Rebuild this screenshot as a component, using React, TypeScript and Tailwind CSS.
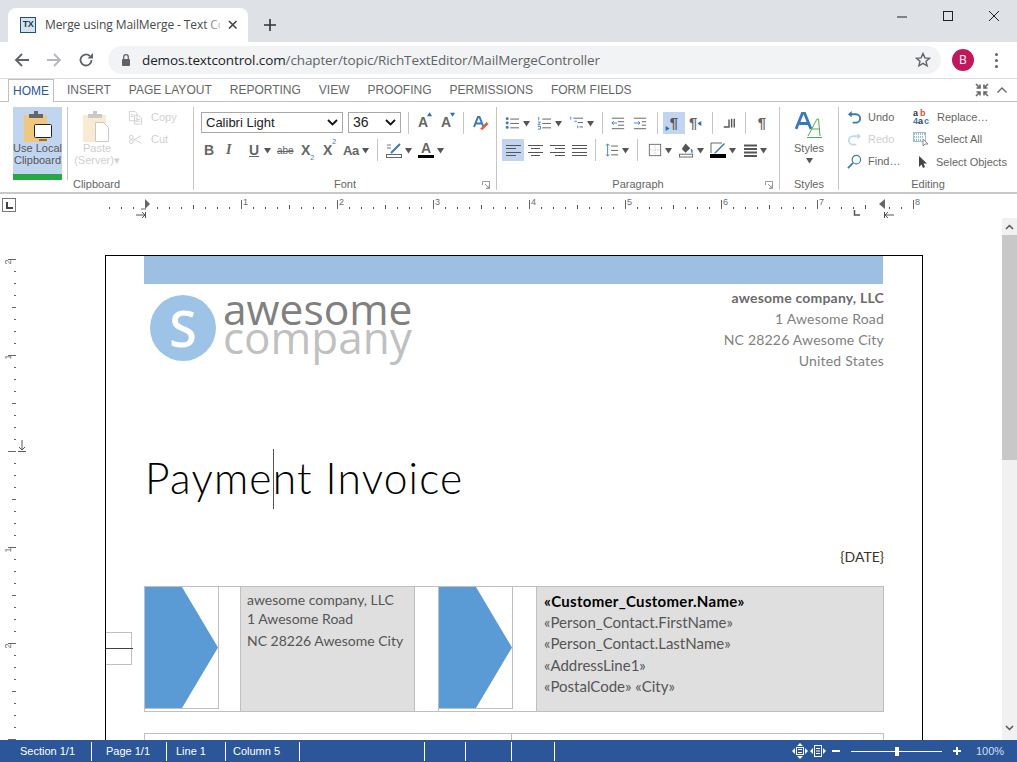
const UI = "font-['Liberation_Sans',Arial,sans-serif]";
const DOC = "font-['Lato','Open_Sans',sans-serif]";

const Arrow = ({ color = '#555', className = '' }: { color?: string; className?: string }) => (
  <svg width="7" height="7" viewBox="0 0 7 7" className={`shrink-0 ${className}`}><path d="M0 1h7L3.5 6.5z" fill={color} /></svg>
);
const Sep = ({ className = '' }: { className?: string }) => <div className={`h-[22px] w-px shrink-0 bg-[#c6c6c6] ${className}`} />;
const Lines = ({ y, x1 = 1, x2 = 15, color = '#555' }: { y: number[]; x1?: number; x2?: number; color?: string }) => (
  <>{y.map((v) => <path key={v} d={`M${x1} ${v}.5H${x2}`} stroke={color} />)}</>
);
const Ico = ({ w = 14, h = 14, vb = '0 0 16 16', className = '', children }: { w?: number; h?: number; vb?: string; className?: string; children: React.ReactNode }) => (
  <svg width={w} height={h} viewBox={vb} className={`shrink-0 ${className}`} fill="none">{children}</svg>
);

function ChromeBar() {
  return (
    <>
      <div className="flex h-[42px] items-end bg-[#dee1e6] pl-2">
        <div className="relative flex h-[34px] w-[240px] items-center overflow-hidden rounded-t-lg bg-white pl-3">
          <div className="flex h-4 w-4 items-center justify-center border border-[#1f4e79] bg-[#d5e3f0] font-['Liberation_Sans'] text-[9px] font-bold tracking-[-0.5px] text-[#1f3a5c]">TX</div>
          <span className="ml-[9px] w-[175px] overflow-hidden whitespace-nowrap font-['Open_Sans',sans-serif] text-xs tracking-[-0.1px] text-[#45494d]">Merge using MailMerge - Text Co</span>
          <div className="absolute left-[196px] top-0 h-full w-6 bg-gradient-to-r from-transparent to-white" />
          <svg width="10" height="10" viewBox="0 0 10 10" className="absolute left-[220px] top-3"><path d="M1 1l7.5 7.5M8.5 1L1 8.5" stroke="#444" strokeWidth="1.6" /></svg>
        </div>
        <svg width="12" height="12" viewBox="0 0 12 12" className="mb-[11px] ml-4"><path d="M6 0v12M0 6h12" stroke="#333" strokeWidth="1.6" /></svg>
        <div className="mb-[20px] ml-auto flex items-center">
          <svg width="12" height="12" viewBox="0 0 12 12" className="mr-[34px]"><path d="M1 7h10" stroke="#222" /></svg>
          <svg width="12" height="12" viewBox="0 0 12 12" className="mr-[34px]"><rect x="1.5" y="1.5" width="9" height="9" stroke="#222" fill="none" /></svg>
          <svg width="12" height="12" viewBox="0 0 12 12" className="mr-[17px]"><path d="M1 1l10 10M11 1L1 11" stroke="#222" /></svg>
        </div>
      </div>
      <div className="flex h-[37px] items-center border-b border-[#dadce0] bg-white">
        <svg width="16" height="16" viewBox="0 0 16 16" className="ml-[14px]"><path d="M15 8H2M8 2L2 8l6 6" stroke="#5f6368" strokeWidth="1.8" fill="none" /></svg>
        <svg width="16" height="16" viewBox="0 0 16 16" className="ml-4"><path d="M1 8h13M8 2l6 6-6 6" stroke="#b4b7bb" strokeWidth="1.8" fill="none" /></svg>
        <svg width="16" height="16" viewBox="0 0 16 16" className="ml-4"><path d="M13.5 8A5.5 5.5 0 1 1 11.8 4" stroke="#5f6368" strokeWidth="1.8" fill="none" /><path d="M9.5 6.5H15V1z" fill="#5f6368" /></svg>
        <div className="ml-[14px] flex h-7 w-[833px] items-center rounded-full bg-[#f1f3f4]">
          <svg width="12" height="14" viewBox="0 0 12 14" className="ml-[12px]"><rect x="2" y="6" width="8" height="7" rx="1" fill="#5f6368" /><path d="M3.7 6V4a2.3 2.3 0 0 1 4.6 0v2" stroke="#5f6368" strokeWidth="1.3" fill="none" /></svg>
          <span className="ml-[10px] whitespace-nowrap font-['Open_Sans',sans-serif] text-[13.5px] tracking-[-0.12px] text-[#5f6368]"><span className="text-[#202124]">demos.textcontrol.com</span>/chapter/topic/RichTextEditor/MailMergeController</span>
          <svg width="16" height="16" viewBox="0 0 16 16" className="ml-auto mr-[10px]"><path d="M8 1.5l1.9 4.4 4.6.4-3.5 3 1.1 4.6L8 11.4l-4.1 2.5L5 9.3l-3.5-3 4.6-.4z" stroke="#5f6368" strokeWidth="1.4" fill="none" /></svg>
        </div>
        <div className="ml-[11px] flex h-[22px] w-[22px] items-center justify-center rounded-full bg-[#c2185b] font-['Open_Sans',sans-serif] text-xs text-white">B</div>
        <div className="ml-[21px] flex flex-col gap-[3px]">
          <div className="h-[3px] w-[3px] rounded-full bg-[#5f6368]" />
          <div className="h-[3px] w-[3px] rounded-full bg-[#5f6368]" />
          <div className="h-[3px] w-[3px] rounded-full bg-[#5f6368]" />
        </div>
      </div>
    </>
  );
}

function RibbonTabs() {
  const tabs = ['INSERT', 'PAGE LAYOUT', 'REPORTING', 'VIEW', 'PROOFING', 'PERMISSIONS', 'FORM FIELDS'];
  return (
    <div className={`flex h-[23px] items-center border-b border-[#c0c0c0] bg-white text-xs text-[#666] ${UI}`}>
      <div className="ml-2 flex h-[23px] w-[46px] items-center justify-center border border-b-0 border-[#c0c0c0] bg-white text-[#2b579a]">HOME</div>
      <div className="ml-[13px] flex gap-[18px]">{tabs.map((t) => <span key={t}>{t}</span>)}</div>
      <svg width="14" height="14" viewBox="0 0 14 14" className="ml-auto"><path d="M1 1l4 4M5 1.5V5H1.5M13 1L9 5M9 1.5V5h3.5M1 13l4-4M5 12.5V9H1.5M13 13L9 9M9 12.5V9h3.5" stroke="#666" strokeWidth="1.6" fill="none" /></svg>
      <svg width="10" height="6" viewBox="0 0 10 6" className="ml-[8px] mr-[10px]"><path d="M0.5 5.5L5 1l4.5 4.5" stroke="#666" strokeWidth="1.3" fill="none" /></svg>
    </div>
  );
}

const GroupLabel = ({ children, launcher }: { children: string; launcher?: boolean }) => (
  <div className="relative mt-auto flex h-[15px] items-center justify-center pt-[3px] text-[11px] text-[#666]">
    {children}
    {launcher && (
      <svg width="8" height="8" viewBox="0 0 8 8" className="absolute bottom-[1px] right-[6px]"><path d="M0.5 4V0.5H7.5V7.5H4M3 3l4 4M7 4.5V7H4.5" stroke="#999" fill="none" /></svg>
    )}
  </div>
);

function ClipboardGroup() {
  return (
    <div className="flex h-[83px] w-[194px] shrink-0 flex-col border-r border-[#c6c6c6]">
      <div className="flex h-[68px]">
        <div className="ml-[13px] flex h-[73px] w-[49px] flex-col items-center border-b-[6px] border-[#28a745] bg-[#c2d5f0] pt-[4px] text-[11px] leading-[12px] text-[#555]">
          <svg width="30" height="31" viewBox="0 0 30 31">
            <rect x="1" y="4" width="23" height="27" fill="#f0c77e" />
            <path d="M6 3h5V0h4v3h5v4H6z" fill="#666" />
            <rect x="11.5" y="13.5" width="17" height="13" rx="1" fill="#fff" stroke="#222" />
            <path d="M16 29h8" stroke="#222" />
          </svg>
          <span className="text-center">Use Local<br />Clipboard</span>
        </div>
        <div className="ml-[5px] h-[73px] w-px bg-[#c6c6c6]" />
        <div className="flex h-[73px] w-[58px] flex-col items-center pt-[4px] text-[11px] leading-[12px] text-[#cfcfcf]">
          <svg width="30" height="31" viewBox="0 0 30 31">
            <rect x="1" y="4" width="23" height="27" fill="#f9ebd2" />
            <path d="M6 3h5V0h4v3h5v4H6z" fill="#c9c9c9" />
            <path d="M13.5 11.5h8l5 5v14h-13z" fill="#fff" stroke="#c9c9c9" />
          </svg>
          <span className="text-center">Paste<br />(Server)▾</span>
        </div>
        <div className="ml-[2px] -mt-px flex flex-col text-[11px] text-[#cfcfcf]">
          <div className="flex h-[22px] items-center gap-2">
            <Ico w={15} h={15}><path d="M1.5 1.5h6l2 2v8h-8zM7 5.5h4l3.5 3v6.5H7z" stroke="#cfcfcf" fill="#fff" /><path d="M3 5h3M3 7h3M9 10h4M9 12h4" stroke="#cfcfcf" /></Ico>
            Copy
          </div>
          <div className="flex h-[22px] items-center gap-2">
            <Ico w={15} h={15}><path d="M14 4L5 9M14 12L5 7" stroke="#cfcfcf" /><circle cx="3.5" cy="5.5" r="2" stroke="#cfcfcf" /><circle cx="3.5" cy="10.5" r="2" stroke="#cfcfcf" /></Ico>
            Cut
          </div>
        </div>
      </div>
      <GroupLabel>Clipboard</GroupLabel>
    </div>
  );
}

const Select = ({ label, className }: { label: string; className: string }) => (
  <div className={`flex h-[21px] items-center justify-between border border-[#a9a9a9] bg-white pl-[4px] pr-[4px] text-[#222] ${className}`}>
    <span className="whitespace-nowrap">{label}</span>
    <svg width="11" height="7" viewBox="0 0 11 7"><path d="M1 1l4.5 4.5L10 1" stroke="#111" strokeWidth="1.8" fill="none" /></svg>
  </div>
);

function FontGroup() {
  return (
    <div className="flex h-[83px] w-[303px] shrink-0 flex-col border-r border-[#c6c6c6] pt-[5px]">
      <div className="flex h-[21px] items-center">
        <Select label="Calibri Light" className="ml-[7px] w-[142px] text-[13px]" />
        <Select label="36" className="ml-[5px] w-[53px] text-[14px]" />
        <Sep className="ml-[7px]" />
        <div className="ml-[9px] flex w-[14px] items-start text-[14px] font-bold text-[#666]">A<Arrow color="#2b6cb0" className="-ml-px h-[5px] w-[5px] rotate-180" /></div>
        <div className="ml-[9px] flex w-[14px] items-start text-[14px] font-bold text-[#666]">A<Arrow color="#2b6cb0" className="-ml-px h-[5px] w-[5px]" /></div>
        <Sep className="ml-[8px]" />
        <Ico w={16} h={16} className="ml-[9px]"><path d="M1 12L5 2h1.5l4 10M3 8.5h5.5" stroke="#3a78b8" strokeWidth="2" /><path d="M7 14l6.5-7 2 2-6 6z" fill="#e2603c" /></Ico>
      </div>
      <div className="mt-[6px] flex h-[22px] items-center text-[#666]">
        <span className="ml-[10px] w-[12px] text-sm font-bold">B</span>
        <span className="ml-[10px] w-[10px] font-['Liberation_Serif'] text-sm font-bold italic">I</span>
        <span className="ml-[13px] w-[11px] text-sm font-bold underline">U</span>
        <Arrow className="ml-[4px]" />
        <span className="ml-[6px] w-[16px] text-[10px] line-through">abe</span>
        <span className="ml-[8px] flex w-[15px] items-end text-sm font-bold">X<sub className="mb-[1px] text-[7px] font-normal leading-none text-[#3a78b8]">2</sub></span>
        <span className="ml-[7px] flex w-[14px] items-start text-sm font-bold">X<sup className="mt-[1px] text-[7px] font-normal leading-none text-[#3a78b8]">2</sup></span>
        <span className="ml-[6px] w-[16px] text-[13px] font-bold leading-none tracking-[-0.5px]">Aa</span>
        <Arrow className="ml-[3px]" />
        <Sep className="ml-[8px]" />
        <Ico w={16} h={16} className="ml-[8px]"><path d="M1 3h4M1 6h4" stroke="#777" /><path d="M5 11l9-9" stroke="#3a78b8" strokeWidth="2" /><rect x="0.5" y="12.5" width="15" height="3" stroke="#666" /></Ico>
        <Arrow className="ml-[3px]" />
        <div className="ml-[6px] flex h-[16px] w-[16px] flex-col items-center text-sm font-bold leading-[12px] text-[#666]">A<div className="mt-[1px] h-[4px] w-[16px] bg-black" /></div>
        <Arrow className="ml-[3px]" />
      </div>
      <GroupLabel launcher>Font</GroupLabel>
    </div>
  );
}

const AlignBtn = ({ y, active, x1, x2 }: { y: number[]; active?: boolean; x1: number[]; x2: number[] }) => (
  <div className={`flex h-[22px] w-[22px] shrink-0 items-center justify-center ${active ? 'bg-[#c2d5f0]' : ''}`}>
    <Ico w={15} h={13} vb="0 0 15 13">
      {y.map((v, i) => <path key={v} d={`M${x1[i]} ${v}.5H${x2[i]}`} stroke="#555" />)}
    </Ico>
  </div>
);

function ParagraphGroup() {
  return (
    <div className="flex h-[83px] w-[283px] shrink-0 flex-col border-r border-[#c6c6c6] pt-[5px]">
      <div className="flex h-[22px] items-center">
        <Ico className="ml-[8px]"><circle cx="2.5" cy="3" r="1.7" fill="#3a78b8" /><circle cx="2.5" cy="8" r="1.7" fill="#3a78b8" /><circle cx="2.5" cy="13" r="1.7" fill="#3a78b8" /><Lines y={[3, 8, 13]} x1={6} x2={16} /></Ico>
        <Arrow className="ml-[4px]" />
        <Ico className="ml-[7px]"><path d="M2 1v4M1 7h3l-3 3h3M1 12h3v3H1" stroke="#3a78b8" /><Lines y={[3, 8, 13]} x1={6} x2={16} /></Ico>
        <Arrow className="ml-[4px]" />
        <Ico className="ml-[7px]"><path d="M2 1v3M6 6h3M10 11v3" stroke="#3a78b8" /><Lines y={[2]} x1={5} x2={16} /><Lines y={[7]} x1={10} x2={16} /><Lines y={[12]} x1={12} x2={16} /></Ico>
        <Arrow className="ml-[4px]" />
        <Sep className="ml-[8px]" />
        <Ico className="ml-[8px]"><Lines y={[2, 14]} /><Lines y={[6, 10]} x1={8} /><path d="M7 8H1M3 6L1 8l2 2" stroke="#3a78b8" /></Ico>
        <Ico className="ml-[8px]"><Lines y={[2, 14]} /><Lines y={[6, 10]} x1={10} /><path d="M1 8h7M6 6l2 2-2 2" stroke="#3a78b8" /></Ico>
        <Sep className="ml-[10px]" />
        <div className={`ml-[5px] flex h-[22px] w-[22px] items-center justify-center bg-[#c2d5f0] text-[15px] font-bold text-[#555] ${UI}`}>
          <span className="relative">¶<Arrow color="#2b6cb0" className="absolute -left-[5px] bottom-[3px] h-[5px] w-[5px] -rotate-90" /></span>
        </div>
        <div className="ml-[4px] flex w-[14px] items-center text-[15px] font-bold text-[#666]">¶<Arrow color="#2b6cb0" className="h-[5px] w-[5px] rotate-90" /></div>
        <Sep className="ml-[9px]" />
        <Ico className="ml-[9px]"><path d="M2 12.5h6V4M11 3v10M14 3v10" stroke="#555" strokeWidth="1.6" /></Ico>
        <Sep className="ml-[9px]" />
        <div className="ml-[9px] w-[14px] text-center text-[15px] font-bold text-[#666]">¶</div>
      </div>
      <div className="mt-[5px] flex h-[22px] items-center">
        <div className="ml-[5px] flex">
          <AlignBtn active y={[1, 4, 8, 11]} x1={[0, 0, 0, 0]} x2={[15, 10, 15, 10]} />
          <AlignBtn y={[1, 4, 8, 11]} x1={[0, 3, 0, 3]} x2={[15, 12, 15, 12]} />
          <AlignBtn y={[1, 4, 8, 11]} x1={[0, 5, 0, 5]} x2={[15, 15, 15, 15]} />
          <AlignBtn y={[1, 4, 8, 11]} x1={[0, 0, 0, 0]} x2={[15, 15, 15, 15]} />
        </div>
        <Sep className="ml-[5px]" />
        <Ico className="ml-[9px]"><path d="M3 1v14M1 3l2-2 2 2M1 13l2 2 2-2" stroke="#3a78b8" /><Lines y={[3, 8, 13]} x1={7} x2={15} /></Ico>
        <Arrow className="ml-[3px]" />
        <Sep className="ml-[8px]" />
        <Ico className="ml-[10px]"><rect x="1.5" y="1.5" width="13" height="13" stroke="#666" /><path d="M8 2v12M2 8h12" stroke="#bbb" strokeDasharray="1 1" /></Ico>
        <Arrow className="ml-[3px]" />
        <Ico w={15} h={16} className="ml-[7px]"><path d="M7 1l5 5-5 5-4-4z" fill="#555" /><path d="M13 7c1 2 1.500 3 .5 4" stroke="#3a78b8" strokeWidth="1.500" /><rect x="0.5" y="12.500" width="14" height="3" stroke="#666" /></Ico>
        <Arrow className="ml-[3px]" />
        <Ico w={16} h={16} className="ml-[6px]"><path d="M12 1H1v10" stroke="#666" /><path d="M5 10l9-9 1 1-9 9-2 1z" fill="#3a78b8" /><rect y="12" width="16" height="4" fill="#000" /></Ico>
        <Arrow className="ml-[3px]" />
        <Ico w={13} h={13} vb="0 0 13 13" className="ml-[8px]"><path d="M0 1.500h13" stroke="#555" strokeWidth="2" /><path d="M0 5h13" stroke="#555" strokeWidth="2" /><path d="M0 8.500h13" stroke="#555" strokeWidth="2" /><path d="M0 12h13" stroke="#555" strokeWidth="2" /></Ico>
        <Arrow className="ml-[3px]" />
      </div>
      <GroupLabel launcher>Paragraph</GroupLabel>
    </div>
  );
}

function StylesGroup() {
  return (
    <div className="flex h-[83px] w-[59px] shrink-0 flex-col items-stretch border-r border-[#c6c6c6] pt-[5px] text-[11px] text-[#666]">
      <svg width="28" height="26" viewBox="0 0 28 26" className="mx-auto shrink-0">
        <path d="M1 17L7.500 1h2L16 17M3.500 11.500h10" stroke="#3a78b8" strokeWidth="2.800" fill="none" />
        <path d="M13 24L22 7h1.500l1.500 17M17 17h8" stroke="#4cb050" fill="none" />
        <path d="M12 25.500h15" stroke="#4cb050" />
      </svg>
      <span className="mt-[4px] text-center leading-[13px]">Styles</span>
      <Arrow className="mx-auto mt-[2px]" />
      <GroupLabel>Styles</GroupLabel>
    </div>
  );
}

function EditingGroup() {
  return (
    <div className="flex h-[83px] flex-1 flex-col text-[11px] text-[#666]">
      <div className="-mt-px flex">
        <div className="ml-[8px] flex w-[66px] flex-col">
          <div className="flex h-[22px] items-center gap-[6px]">
            <Ico w={15} h={15}><path d="M3 4.500h6.500a4.500 4.500 0 0 1 0 9H6" stroke="#3a78b8" strokeWidth="2" /><path d="M5 1L1 4.500 5 8z" fill="#3a78b8" /></Ico>
            Undo
          </div>
          <div className="flex h-[22px] items-center gap-[6px] text-[#cfcfcf]">
            <Ico w={15} h={15}><path d="M13 4.500H6.500a4.500 4.500 0 0 0 0 9H10" stroke="#c5d9ea" strokeWidth="2" /><path d="M11 1l4 3.500L11 8z" fill="#c5d9ea" /></Ico>
            Redo
          </div>
          <div className="flex h-[22px] items-center gap-[6px]">
            <Ico w={15} h={15}><circle cx="10" cy="6" r="4.500" stroke="#3a78b8" strokeWidth="1.300" /><path d="M6.500 9.500L1 15" stroke="#3a78b8" strokeWidth="1.800" /></Ico>
            Find…
          </div>
        </div>
        <div className="flex flex-col">
          <div className="flex h-[22px] items-center">
            <div className="relative h-[16px] w-[16px] text-[9px] font-bold leading-[8px]">
              <span className="absolute left-0 top-0 text-[#333]">a</span><span className="absolute left-[7px] top-0 text-[#d8552f]">b</span>
              <span className="absolute bottom-0 left-0 text-[#3a78b8]">4</span><span className="absolute bottom-0 left-[5px] text-[#333]">a</span><span className="absolute bottom-0 left-[11px] text-[#3a78b8]">c</span>
            </div>
            <span className="ml-[8px]">Replace…</span>
          </div>
          <div className="flex h-[22px] items-center">
            <Ico w={16} h={16}><path d="M1 3h12M1 6h10M1 9h8" stroke="#3a78b8" strokeDasharray="1 1" /><rect x="0.500" y="1.500" width="12" height="9" stroke="#3a78b8" strokeDasharray="1 1" /><path d="M10 8v7l2-2h3z" fill="#fff" stroke="#888" /></Ico>
            <span className="ml-[8px]">Select All</span>
          </div>
          <div className="flex h-[22px] items-center pl-[5px] pt-[2px]">
            <Ico w={9} h={13} vb="0 0 9 13"><path d="M1 0v11l2.500-2.500L5 12l2-1-1.500-3.500H9z" fill="#444" /></Ico>
            <span className="ml-[9px] whitespace-nowrap">Select Objects</span>
          </div>
        </div>
      </div>
      <GroupLabel>Editing</GroupLabel>
    </div>
  );
}

function Ribbon() {
  return (
    <div className={`flex h-[92px] border-b-2 border-[#c8c8c8] bg-white pt-[5px] ${UI}`}>
      <ClipboardGroup />
      <FontGroup />
      <ParagraphGroup />
      <StylesGroup />
      <EditingGroup />
    </div>
  );
}

function HRuler() {
  const ticks = [];
  for (let x = 109; x <= 913; x += 12) {
    const n = Math.round((x - 145) / 12);
    if (x === 145 || x === 877) continue;
    const major = n % 8 === 0;
    const half = n % 4 === 0;
    ticks.push(<path key={x} d={`M${x}.5 ${major ? 6 : half ? 11 : 13}V15`} stroke={major ? '#666' : '#555'} />);
  }
  return (
    <div className="flex h-6 bg-white">
      <div className="ml-[2px] mt-[4px] flex h-[14px] w-[14px] items-center justify-center border border-[#777]">
        <svg width="7" height="7" viewBox="0 0 7 7"><path d="M1 0v6h6" stroke="#444" strokeWidth="2" fill="none" /></svg>
      </div>
      <svg width="1000" height="24" viewBox="16 0 1000 24" className={UI}>
        {ticks}
        {[1, 2, 3, 4, 5, 6, 7, 8].map((n) => (
          <text key={n} x={241 + (n - 1) * 96 + 2} y="11" fontSize="9" fill="#6a6a6a">{n}</text>
        ))}
        <path d="M145 5l5 5-5 5z" fill="#666" /><path d="M141 15h5" stroke="#666" />
        <path d="M136 21h9M142 18l3 3-3 3M145.500 18v6" stroke="#555" fill="none" />
        <path d="M885 5l-6 5 6 5z" fill="#666" />
        <path d="M885 21h9M888 18l-3 3 3 3M884.500 18v6" stroke="#555" fill="none" />
        <path d="M854.500 16v5H860" stroke="#555" strokeWidth="1.500" fill="none" />
      </svg>
    </div>
  );
}

function VRuler() {
  const marks = [];
  for (let y = 259; y <= 740; y += 12) {
    const n = Math.round((y - 451) / 12);
    const major = n % 8 === 0;
    const half = n % 4 === 0;
    marks.push(<path key={y} d={`M${major ? 8 : half ? 12 : 14} ${y - 218}.5H16`} stroke="#666" />);
  }
  return (
    <svg width="105" height="522" viewBox="0 0 105 522" className={`shrink-0 ${UI}`}>
      {marks}
      {[[2, 262], [1, 357], [1, 550], [2, 646]].map(([n, y]) => (
        <text key={y} x="0" y="0" fontSize="9" fill="#6a6a6a" transform={`translate(11 ${y - 218}) rotate(-90)`} textAnchor="middle">{n}</text>
      ))}
      <path d="M22 222v10M19 229l3 3 3-3M18 233.500h8" stroke="#555" fill="none" />
    </svg>
  );
}

const ArrowBox = () => (
  <div className="h-[122px] w-[74px] border-r border-b border-[#bfbfbf] bg-white">
    <svg width="73" height="121" viewBox="0 0 73 121" className="block"><polygon points="0,0 37,0 73,60.500 37,121 0,121" fill="#5b9bd5" /></svg>
  </div>
);

function Page() {
  return (
    <div className={`relative mt-[37px] h-[520px] w-[818px] shrink-0 border-x border-t border-black bg-white pl-[38px] pr-[38px] ${DOC}`}>
      <div className="h-[28px] w-[739px] bg-[#9dc0e2]" />
      <div className="flex h-[92px] items-start justify-between">
        <div className="ml-[6px] mt-[11px] flex">
          <div className="flex h-[66px] w-[66px] items-center justify-center rounded-full bg-[#9dc3e6] font-['Open_Sans',sans-serif] text-[50px] font-semibold leading-none text-white">S</div>
          <div className="-mt-px ml-[7px] font-['Open_Sans',sans-serif] text-[#808080]">
            <div className="h-[29px] text-[42.5px] leading-[29px]">awesome</div>
            <div className="h-[29px] text-[44px] leading-[29px] text-[#c0c0c0]">company</div>
          </div>
        </div>
        <div className="mt-[3px] text-right text-[14px] leading-[21px] tracking-[0.2px] text-[#7f7f7f]">
          <div className="font-bold text-[#6b6b6b]">awesome company, LLC</div>
          <div>1 Awesome Road</div>
          <div>NC 28226 Awesome City</div>
          <div>United States</div>
        </div>
      </div>
      <div className="mt-[72px] h-[60px] pl-[1px] text-[42.5px] font-light leading-[60px] tracking-[1.2px] text-black">
        Payme<span className="relative"><span className="absolute -top-[3px] left-0 h-[60px] w-px bg-[#555]" /></span>nt Invoice
      </div>
      <div className="mt-[39px] text-right text-[14px] leading-[20px] text-[#3a3226]">{'{DATE}'}</div>
      <div className="mt-[19px] flex h-[126px] w-[740px] border border-[#bfbfbf] bg-white text-[14px] text-[#555]">
        <ArrowBox />
        <div className="ml-[21px] h-full w-[175px] border-x border-[#bfbfbf] bg-[#dfdfdf] pl-[6px] pt-[2px] leading-[21px]">
          <div>awesome company, LLC</div>
          <div className="-mt-[2px]">1 Awesome Road</div>
          <div className="mt-[1px]">NC 28226 Awesome City</div>
        </div>
        <div className="ml-[23px] h-full border-l border-[#bfbfbf]"><ArrowBox /></div>
        <div className="ml-[23px] h-full flex-1 border-l border-[#bfbfbf] bg-[#dfdfdf] pl-[7px] pt-[4px] text-[15px] leading-[21px]">
          <div className="font-bold tracking-[0.3px] text-black">«Customer_Customer.Name»</div>
          <div>«Person_Contact.FirstName»</div>
          <div>«Person_Contact.LastName»</div>
          <div className="mt-[1px]">«AddressLine1»</div>
          <div>«PostalCode» «City»</div>
        </div>
      </div>
      <div className="mt-[21px] flex h-[30px] w-[740px] border border-[#bfbfbf]"><div className="h-full w-[367px] border-r border-[#bfbfbf]" /></div>
      <div className="absolute left-0 top-[376px] h-[33px] w-[26px] border border-l-0 border-[#bfbfbf] bg-white">
        <div className="mt-[15px] h-px w-[27px] bg-[#444]" />
      </div>
    </div>
  );
}

function Scrollbar() {
  return (
    <div className="ml-auto flex w-[15px] shrink-0 flex-col bg-[#f1f1f1]">
      <div className="flex h-[17px] items-center justify-center">
        <svg width="9" height="6" viewBox="0 0 9 6"><path d="M1 5l3.500-3.500L8 5" stroke="#555" strokeWidth="1.500" fill="none" /></svg>
      </div>
      <div className="h-[225px] bg-[#c8c8c8]" />
      <div className="mb-[4px] mt-auto flex h-[17px] items-center justify-center">
        <svg width="9" height="6" viewBox="0 0 9 6"><path d="M1 1l3.500 3.500L8 1" stroke="#555" strokeWidth="1.500" fill="none" /></svg>
      </div>
    </div>
  );
}

function StatusBar() {
  const cell = 'flex h-[19px] items-center border-r border-white';
  return (
    <div className={`flex h-[22px] items-center bg-[#2b579a] text-[11px] text-white ${UI}`}>
      <div className={`${cell} w-[92px] pl-[20px]`}>Section 1/1</div>
      <div className={`${cell} w-[75px] pl-[14px]`}>Page 1/1</div>
      <div className={`${cell} w-[59px] pl-[9px]`}>Line 1</div>
      <div className={`${cell} w-[74px] pl-[7px]`}>Column 5</div>
      <div className={`${cell} w-[125px]`} />
      <div className={`${cell} w-[41px]`} />
      <div className={`${cell} w-[46px]`} />
      <div className={`${cell} w-[43px]`} />
      <svg width="16" height="16" viewBox="0 0 16 16" className="ml-[237px]"><rect x="4.500" y="4.500" width="7" height="7" stroke="#fff" fill="none" /><path d="M6 6.500h4M6 9.500h4" stroke="#fff" /><path d="M0 8l3-3v6zM16 8l-3-3v6zM8 0L5 3h6zM8 16l-3-3h6z" fill="#fff" /></svg>
      <svg width="16" height="14" viewBox="0 0 16 14" className="ml-[2px]"><rect x="4.500" y="1.500" width="7" height="11" stroke="#fff" fill="none" /><path d="M6 4.500h4M6 7h4M6 9.500h4" stroke="#fff" /><path d="M0 7l3-3v6zM16 7l-3-3v6z" fill="#fff" /></svg>
      <div className="ml-[6px] h-[2px] w-[8px] bg-white" />
      <div className="relative ml-[11px] h-px w-[91px] bg-white">
        <div className="absolute left-[44px] -top-[4px] h-[9px] w-[4px] bg-white" />
      </div>
      <svg width="8" height="8" viewBox="0 0 8 8" className="ml-[11px]"><path d="M4 0v8M0 4h8" stroke="#fff" strokeWidth="2" /></svg>
      <span className="ml-[15px] text-[#d7dfee]">100%</span>
    </div>
  );
}

export default function App() {
  return (
    <div className="flex h-[762px] w-[1017px] flex-col overflow-hidden bg-white">
      <ChromeBar />
      <RibbonTabs />
      <Ribbon />
      <HRuler />
      <div className="flex h-[522px] overflow-hidden">
        <VRuler />
        <Page />
        <Scrollbar />
      </div>
      <StatusBar />
    </div>
  );
}
